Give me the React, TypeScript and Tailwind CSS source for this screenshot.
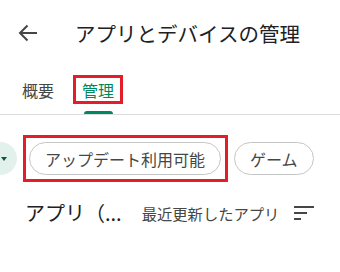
const font = { fontFamily: '"Noto Sans CJK JP", "Noto Sans", sans-serif' };

function BackArrow() {
  return (
    <svg width="19" height="18" viewBox="0 0 19 18" fill="none" stroke="#444746" strokeWidth="2">
      <path d="M19 9H2" />
      <path d="M9.5 1.5L2 9l7.5 7.5" />
    </svg>
  );
}

function SortIcon() {
  return (
    <svg width="20" height="14" viewBox="0 0 20 14" fill="#444746">
      <rect x="0" y="0" width="20" height="2" />
      <rect x="0" y="6" width="13" height="2" />
      <rect x="0" y="12" width="7" height="2" />
    </svg>
  );
}

export default function App() {
  return (
    <div className="w-[340px] h-[272px] overflow-hidden bg-white" style={font}>
      <header className="h-[66px] flex items-center pl-[18px]">
        <BackArrow />
        <h1 className="ml-[38px] text-[20.5px] leading-[28px] font-normal text-[#202124] whitespace-nowrap">
          アプリとデバイスの管理
        </h1>
      </header>

      <nav className="border-b border-[#dadce0] flex items-start pl-[22px] pt-[9px]">
        <span className="pt-[7px] text-[16px] leading-[16px] text-[#444746]">概要</span>
        <div className="ml-[19px] flex flex-col items-center">
          <span className="border-[3px] border-[#e31e28] px-[6px] pt-[4px] pb-[3px] text-[16px] leading-[16px] text-[#01875f]">
            管理
          </span>
          <span className="mt-[7px] w-[29px] h-[3px] rounded-t-[3px] bg-[#01875f]" />
        </div>
      </nav>

      <div className="mt-[20px] flex items-center gap-[6px]">
        <div className="-ml-[23px] w-[40px] h-[33px] rounded-full bg-[#e3f1ec] flex items-center justify-end pr-[10px]">
          <svg width="6" height="4" viewBox="0 0 6 4" fill="#0b5940">
            <path d="M0 0h6L3 4z" />
          </svg>
        </div>
        <div className="border-[3px] border-[#e31e28] pl-[3px] pr-[4px] py-[4px]">
          <span className="h-[33px] flex items-center px-[15px] rounded-full border border-[#c4c7c5] text-[16px] leading-[16px] text-[#444746] whitespace-nowrap">
            アップデート利用可能
          </span>
        </div>
        <span className="h-[33px] flex items-center px-[15px] rounded-full border border-[#c4c7c5] text-[16px] leading-[16px] text-[#444746] whitespace-nowrap">
          ゲーム
        </span>
      </div>

      <div className="mt-[17px] flex items-center pl-[25px] h-[28px]">
        <span className="text-[20px] leading-[28px] text-[#202124] whitespace-nowrap">アプリ（...</span>
        <span className="ml-[20px] text-[15.3px] leading-[20px] text-[#444746] whitespace-nowrap">
          最近更新したアプリ
        </span>
        <span className="ml-[15px] flex items-center">
          <SortIcon />
        </span>
      </div>
    </div>
  );
}
